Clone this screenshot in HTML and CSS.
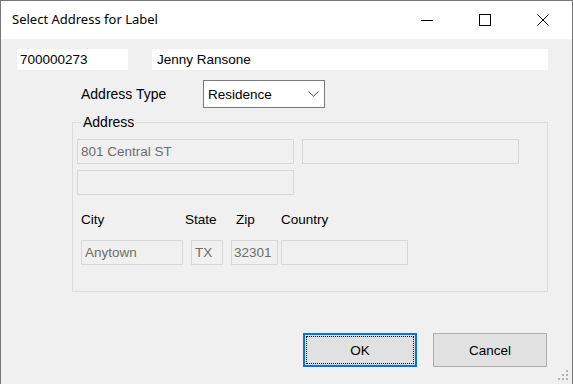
FILE: index.html
```html
<!DOCTYPE html>
<html lang="en">
<head>
  <meta charset="UTF-8" />
  <title>Select Address for Label</title>
  <link rel="stylesheet" href="styles.css">
</head>
<body>
  <div class="window">
    <div class="titlebar">
      <span class="title">Select Address for Label</span>
      <div class="caption-buttons">
        <span class="cap-btn">
          <svg width="12" height="12" viewBox="0 0 12 12"><path d="M0 6.5h12" stroke="#000" stroke-width="1"/></svg>
        </span>
        <span class="cap-btn">
          <svg width="12" height="12" viewBox="0 0 12 12"><rect x="0.5" y="0.5" width="11" height="11" fill="none" stroke="#000" stroke-width="1"/></svg>
        </span>
        <span class="cap-btn">
          <svg width="12" height="12" viewBox="0 0 12 12"><path d="M0.5 0.5L11.5 11.5M11.5 0.5L0.5 11.5" stroke="#000" stroke-width="1"/></svg>
        </span>
      </div>
    </div>

    <div class="content">
      <div class="row-top">
        <div class="box box-id">700000273</div>
        <div class="box box-name">Jenny Ransone</div>
      </div>

      <div class="row-type">
        <label class="type-label">Address Type</label>
        <div class="combo">
          <span>Residence</span>
          <svg width="11" height="6" viewBox="0 0 11 6"><path d="M0.5 0.5L5.5 5.2L10.5 0.5" fill="none" stroke="#444" stroke-width="1"/></svg>
        </div>
      </div>

      <fieldset class="group">
        <legend>Address</legend>
        <div class="addr-row">
          <div class="field field-addr">801 Central ST</div>
          <div class="field field-addr"></div>
        </div>
        <div class="addr-row second">
          <div class="field field-addr"></div>
        </div>

        <div class="labels-row">
          <span class="lbl-city">City</span>
          <span class="lbl-state">State</span>
          <span class="lbl-zip">Zip</span>
          <span class="lbl-country">Country</span>
        </div>
        <div class="city-row">
          <div class="field f-city">Anytown</div>
          <div class="field f-state">TX</div>
          <div class="field f-zip">32301</div>
          <div class="field f-country"></div>
        </div>
      </fieldset>

      <div class="buttons">
        <button class="btn btn-ok">OK</button>
        <button class="btn">Cancel</button>
      </div>
    </div>

    <svg class="grip" width="12" height="12" viewBox="0 0 12 12">
      <rect x="8" y="0" width="2" height="2" fill="#b4b4b4"/>
      <rect x="4" y="4" width="2" height="2" fill="#b4b4b4"/>
      <rect x="8" y="4" width="2" height="2" fill="#b4b4b4"/>
      <rect x="0" y="8" width="2" height="2" fill="#b4b4b4"/>
      <rect x="4" y="8" width="2" height="2" fill="#b4b4b4"/>
      <rect x="8" y="8" width="2" height="2" fill="#b4b4b4"/>
    </svg>
  </div>
</body>
</html>
```

FILE: styles.css
```css
body {
  margin: 0;
  font-family: 'Liberation Sans', Arial, sans-serif;
  font-size: 13.5px;
  color: #000;
  background: #f0f0f0;
}

.window {
  position: relative;
  width: 573px;
  height: 384px;
  box-sizing: border-box;
  border: 1px solid #767676;
  border-bottom: none;
  background: #f0f0f0;
  overflow: hidden;
}

.titlebar {
  height: 38px;
  background: #fff;
  display: flex;
  align-items: center;
  justify-content: space-between;
}

.title {
  font-family: 'Noto Sans', 'Open Sans', sans-serif;
  font-size: 13px;
  padding-left: 11px;
  margin-top: -2px;
}

.caption-buttons {
  display: flex;
  height: 100%;
}

.cap-btn {
  width: 58px;
  display: flex;
  align-items: center;
  justify-content: center;
}

.content {
  padding-top: 10px;
}

.row-top {
  display: flex;
  gap: 24px;
  padding-left: 16px;
}

.box {
  height: 21px;
  line-height: 21px;
  background: #fff;
  box-sizing: border-box;
  padding-left: 4px;
}

.box-id {
  width: 111px;
  padding-left: 3px;
}

.box-name {
  width: 396px;
  padding-left: 5px;
}

.row-type {
  display: flex;
  align-items: center;
  margin-top: 10px;
  padding-left: 80px;
}

.type-label {
  width: 122px;
  font-size: 14px;
}

.combo {
  width: 122px;
  height: 28px;
  box-sizing: border-box;
  border: 1px solid #7a7a7a;
  background: #fff;
  display: flex;
  align-items: center;
  justify-content: space-between;
  padding: 0 5px 0 4px;
}

.group {
  margin: 7px 0 0 71px;
  width: 476px;
  height: 177px;
  box-sizing: border-box;
  border: 1px solid #dcdcdc;
  padding: 10px 0 0 4px;
  min-width: 0;
}

.group legend {
  padding: 0 2px;
  margin-left: 4px;
  line-height: 14px;
  font-size: 14px;
}

.addr-row {
  display: flex;
  gap: 8px;
}

.addr-row.second {
  margin-top: 6px;
}

.field {
  height: 25px;
  line-height: 23px;
  box-sizing: border-box;
  border: 1px solid #d7d7d7;
  background: #f0f0f0;
  color: #6d6d6d;
  padding-left: 3px;
}

.field-addr {
  width: 217px;
}

.labels-row {
  display: flex;
  margin-top: 17px;
  padding-left: 4px;
}

.lbl-city {
  width: 104px;
}

.lbl-state {
  width: 51px;
}

.lbl-zip {
  width: 45px;
}

.city-row {
  display: flex;
  margin-top: 13px;
  padding-left: 4px;
}

.f-city {
  width: 102px;
  margin-right: 8px;
}

.f-state {
  width: 32px;
  margin-right: 8px;
}

.f-zip {
  width: 47px;
  margin-right: 3px;
  padding-left: 2px;
}

.f-country {
  width: 127px;
}

.buttons {
  display: flex;
  gap: 16px;
  padding-left: 302px;
  margin-top: 41px;
}

.btn {
  width: 114px;
  height: 34px;
  border: 1px solid #adadad;
  background: #e1e1e1;
  font-family: 'Liberation Sans', Arial, sans-serif;
  font-size: 13.5px;
  color: #000;
  padding: 0;
}

.btn-ok {
  border-color: #0078d7;
  box-shadow: inset 0 0 0 1px #0078d7;
  outline: 1px dotted #000;
  outline-offset: -4px;
}

.grip {
  position: absolute;
  right: 2px;
  bottom: 2px;
}
```
